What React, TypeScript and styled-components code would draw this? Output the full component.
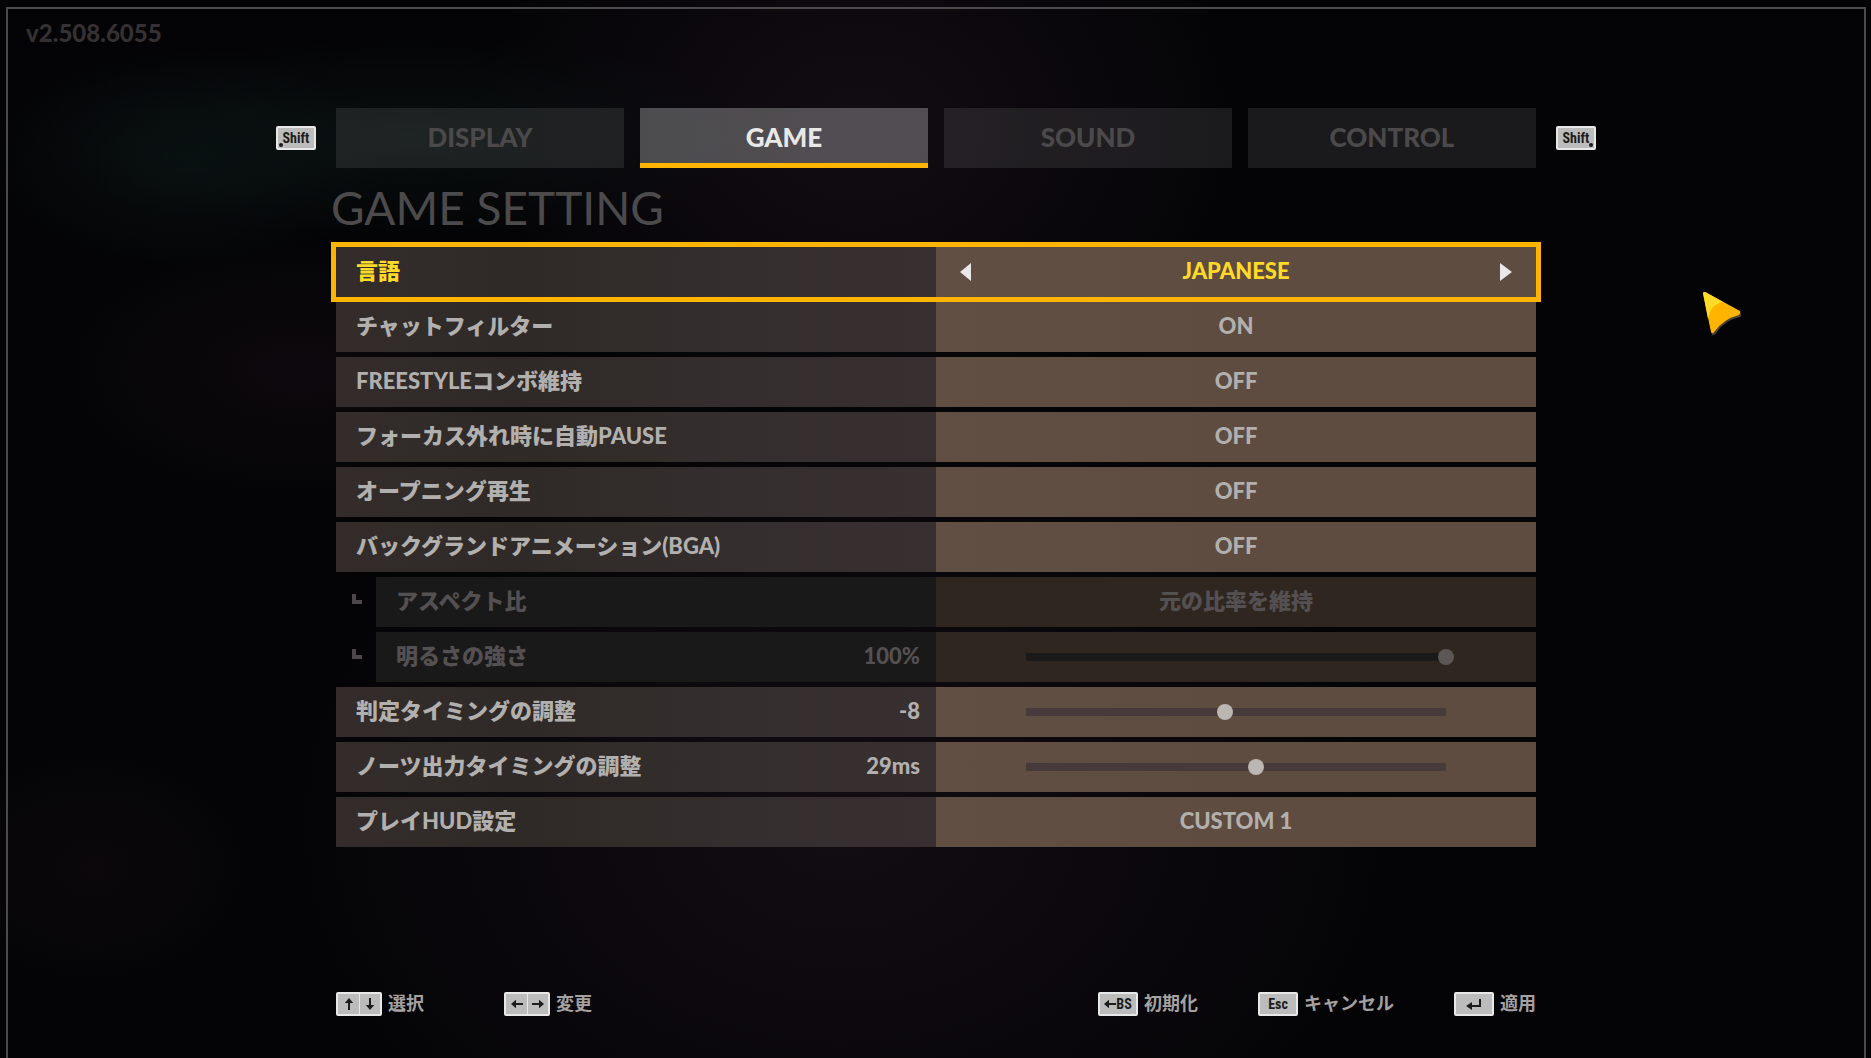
import React, { useState } from "react";
import styled, { createGlobalStyle, css } from "styled-components";

const GlobalStyle = createGlobalStyle`
  *, *::before, *::after { box-sizing: border-box; }
  body {
    margin: 0;
    background: #040406;
    color: #b2b0ae;
    font-family: Lato, "Noto Sans CJK JP", sans-serif;
    font-weight: 900;
  }
  button {
    margin: 0;
    padding: 0;
    border: 0;
    background: none;
    color: inherit;
    font: inherit;
    cursor: inherit;
  }
`;

const Screen = styled.div`
  min-height: 100vh;
  padding: 7px 5px 0 6px;
  display: flex;
  flex-direction: column;
  background:
    radial-gradient(ellipse 200px 110px at 10% 15%, rgba(12, 22, 21, 0.6), transparent),
    radial-gradient(ellipse 380px 100px at 22% 13%, rgba(12, 22, 21, 0.6), transparent),
    radial-gradient(ellipse 380px 300px at 46% 12%, rgba(24, 15, 24, 0.75), transparent),
    radial-gradient(ellipse 240px 130px at 16% 35%, rgba(22, 13, 20, 0.5), transparent),
    radial-gradient(ellipse 560px 420px at 45% 78%, rgba(24, 15, 24, 0.75), transparent),
    radial-gradient(ellipse 160px 120px at 5% 82%, rgba(18, 11, 16, 0.5), transparent),
    #040406;
`;

const Frame = styled.div`
  position: relative;
  flex: 1;
  display: flex;
  flex-direction: column;
  border: 2px solid #4c4a4b;
  border-bottom: 0;
`;

const Version = styled.div`
  height: 99px;
  padding: 8px 18px;
  font-size: 24px;
  line-height: 32px;
  color: #353132;
`;

const Content = styled.div`
  width: 100%;
  max-width: 1320px;
  margin: 0 auto;
  flex: 1;
  display: flex;
  flex-direction: column;
`;

const TabBar = styled.nav`
  display: flex;
  align-items: center;
  gap: 20px;
`;

const TabList = styled.div`
  flex: 1;
  display: grid;
  grid-template-columns: repeat(4, 1fr);
  gap: 16px;
`;

const Tab = styled.button<{ $active: boolean }>`
  height: 60px;
  padding-bottom: 2px;
  font-size: 26px;
  line-height: 48px;
  color: ${(p) => (p.$active ? "#e9e8e8" : "#4b494a")};
  background: ${(p) => (p.$active ? "rgba(255, 255, 255, 0.27)" : "rgba(255, 255, 255, 0.09)")};
  border-bottom: 5px solid ${(p) => (p.$active ? "#ffb400" : "transparent")};
  border-top: 5px solid transparent;
`;

const Panel = styled.main`
  padding: 0 60px;
`;

const Title = styled.h1`
  margin: 0 0 0 -5px;
  font-size: 46px;
  line-height: 79px;
  font-weight: 400;
  color: #4c4a4b;
`;

const Rows = styled.div`
  display: grid;
  gap: 5px;
`;

const Row = styled.div<{ $selected?: boolean; $disabled?: boolean }>`
  display: flex;
  height: 50px;
  font-size: 22px;
  line-height: 48px;
  color: ${(p) => (p.$selected ? "#ffda29" : p.$disabled ? "#545051" : "#b2b0ae")};
  ${(p) =>
    p.$selected &&
    css`
      outline: 5px solid #ffb400;
      z-index: 1;
    `}
`;

const Branch = styled.div`
  width: 40px;
  display: flex;
  align-items: center;
  padding: 0 0 6px 16px;
`;

const BranchMark = styled.span`
  width: 10px;
  height: 10px;
  border: solid #4c4748;
  border-width: 0 0 4px 4px;
`;

const NameCell = styled.div<{ $disabled?: boolean; $indent?: boolean }>`
  width: ${(p) => (p.$indent ? "calc(50% - 40px)" : "50%")};
  display: flex;
  justify-content: space-between;
  padding: 0 16px 0 20px;
  white-space: nowrap;
  background: ${(p) =>
    p.$disabled ? "#1a191a" : "linear-gradient(90deg, #332c2b, #2f2a28 30%, #352e2e 70%, #372f30)"};
`;

const ValueCell = styled.div<{ $disabled?: boolean }>`
  width: 50%;
  display: flex;
  align-items: center;
  justify-content: center;
  background: ${(p) => (p.$disabled ? "#2f2620" : "linear-gradient(90deg, #624f44, #5f4c41 50%, #5e4c40)")};
`;

const Choice = styled.button`
  flex: 1;
  height: 50px;
  padding-bottom: 2px;
`;

const Stepper = styled.div`
  flex: 1;
  display: flex;
  align-items: center;
  justify-content: space-between;
  padding: 0 24px;
`;

const StepValue = styled.output`
  padding-bottom: 2px;
`;

const StepButton = styled.button`
  display: flex;
  width: 12px;
  height: 18px;
`;

const Slider = styled.input`
  appearance: none;
  width: 436px;
  height: 16px;
  margin: 0;
  background: linear-gradient(#463b3a, #463b3a) center / calc(100% - 16px) 8px no-repeat;
  &::-webkit-slider-thumb {
    appearance: none;
    width: 16px;
    height: 16px;
    border-radius: 50%;
    background: #bbb6b1;
  }
  &:disabled {
    background-image: linear-gradient(#1b1919, #1b1919);
  }
  &:disabled::-webkit-slider-thumb {
    background: #5c5654;
  }
`;

const Footer = styled.footer`
  margin-top: auto;
  padding: 0 60px 42px;
  display: flex;
  justify-content: space-between;
`;

const HintGroup = styled.div<{ $gap: number }>`
  display: flex;
  gap: ${(p) => p.$gap}px;
`;

const Hint = styled.button`
  display: flex;
  align-items: center;
  gap: 6px;
  height: 24px;
  font-size: 18px;
  font-weight: 700;
  line-height: 22px;
  color: #a5a1a0;
`;

const HintText = styled.span`
  padding-bottom: 2px;
`;

const Keys = styled.span`
  display: flex;
  border: 2px solid #e8e8e8;
  border-radius: 2px;
  background: #bcbcbc;
`;

const Key = styled.span<{ $narrow?: boolean }>`
  position: relative;
  width: ${(p) => (p.$narrow ? 21 : 36)}px;
  height: 20px;
  display: flex;
  align-items: center;
  justify-content: center;
  font: 700 14px/20px "Liberation Sans Narrow", "Roboto Condensed", "Liberation Sans", sans-serif;
  color: #1c1c1c;
  & + & {
    border-left: 1px solid #e8e8e8;
  }
`;

const Dot = styled.i<{ $side: "left" | "right" }>`
  position: absolute;
  bottom: 1px;
  ${(p) => p.$side}: 1px;
  width: 4px;
  height: 4px;
  border-radius: 50%;
  background: #1c1c1c;
`;

const Pointer = styled.svg`
  position: absolute;
  top: 283px;
  left: 91.3%;
`;

const ArrowIcon = ({ turn }: { turn: number }) => (
  <svg width="12" height="12" viewBox="0 0 12 12" aria-hidden="true">
    <g transform={`rotate(${turn} 6 6)`} fill="#1c1c1c">
      <path d="M0 6 5 1.8V5h7v2H5v3.2z" />
    </g>
  </svg>
);

const EnterIcon = () => (
  <svg width="18" height="14" viewBox="0 0 18 14" aria-hidden="true">
    <path d="M15 2v7H6" fill="none" stroke="#1c1c1c" strokeWidth="2" />
    <path d="M1 9 7 5v8z" fill="#1c1c1c" />
  </svg>
);

const ShiftKey = ({ side }: { side: "left" | "right" }) => (
  <Keys>
    <Key>
      Shift
      <Dot $side={side} />
    </Key>
  </Keys>
);

type Setting = {
  id: string;
  name: string;
  kind: "stepper" | "choice" | "slider";
  value: string;
  child?: boolean;
  range?: [min: number, max: number, start: number];
  unit?: string;
};

const settings: Setting[] = [
  { id: "language", name: "言語", kind: "stepper", value: "JAPANESE" },
  { id: "chat", name: "チャットフィルター", kind: "choice", value: "ON" },
  { id: "freestyle", name: "FREESTYLEコンボ維持", kind: "choice", value: "OFF" },
  { id: "focus", name: "フォーカス外れ時に自動PAUSE", kind: "choice", value: "OFF" },
  { id: "opening", name: "オープニング再生", kind: "choice", value: "OFF" },
  { id: "bga", name: "バックグランドアニメーション(BGA)", kind: "choice", value: "OFF" },
  { id: "aspect", name: "アスペクト比", kind: "choice", value: "元の比率を維持", child: true },
  { id: "brightness", name: "明るさの強さ", kind: "slider", value: "", child: true, range: [0, 100, 100], unit: "%" },
  { id: "judge", name: "判定タイミングの調整", kind: "slider", value: "", range: [-150, 150, -8], unit: "" },
  { id: "notes", name: "ノーツ出力タイミングの調整", kind: "slider", value: "", range: [-300, 300, 29], unit: "ms" },
  { id: "hud", name: "プレイHUD設定", kind: "choice", value: "CUSTOM 1" },
];

const SettingRow = ({ item }: { item: Setting }) => {
  const [amount, setAmount] = useState(item.range ? item.range[2] : 0);
  const off = item.child;
  return (
    <Row $selected={item.kind === "stepper"} $disabled={off}>
      {off && (
        <Branch>
          <BranchMark />
        </Branch>
      )}
      <NameCell $disabled={off} $indent={off}>
        <label htmlFor={item.id}>{item.name}</label>
        {item.range && (
          <output htmlFor={item.id}>
            {amount}
            {item.unit}
          </output>
        )}
      </NameCell>
      <ValueCell $disabled={off}>
        {item.kind === "slider" && item.range && (
          <Slider
            id={item.id}
            type="range"
            min={item.range[0]}
            max={item.range[1]}
            value={amount}
            disabled={off}
            onChange={(e) => setAmount(Number(e.target.value))}
          />
        )}
        {item.kind === "choice" && (
          <Choice id={item.id} type="button" disabled={off}>
            {item.value}
          </Choice>
        )}
        {item.kind === "stepper" && (
          <Stepper>
            <StepButton type="button" aria-label="前へ">
              <svg width="12" height="18" viewBox="0 0 12 18">
                <path d="M11 0v18L0 9z" fill="#e8e8e8" />
              </svg>
            </StepButton>
            <StepValue id={item.id}>{item.value}</StepValue>
            <StepButton type="button" aria-label="次へ">
              <svg width="12" height="18" viewBox="0 0 12 18">
                <path d="M0 0v18l12-9z" fill="#e8e8e8" />
              </svg>
            </StepButton>
          </Stepper>
        )}
      </ValueCell>
    </Row>
  );
};

const tabs = ["DISPLAY", "GAME", "SOUND", "CONTROL"];

export default function App() {
  const [active, setActive] = useState("GAME");
  return (
    <>
      <GlobalStyle />
      <Screen>
        <Frame>
          <Version>v2.508.6055</Version>
          <Content>
            <TabBar>
              <ShiftKey side="left" />
              <TabList role="tablist">
                {tabs.map((t) => (
                  <Tab
                    key={t}
                    type="button"
                    role="tab"
                    aria-selected={t === active}
                    $active={t === active}
                    onClick={() => setActive(t)}
                  >
                    {t}
                  </Tab>
                ))}
              </TabList>
              <ShiftKey side="right" />
            </TabBar>
            <Panel>
              <Title>GAME SETTING</Title>
              <Rows>
                {settings.map((s) => (
                  <SettingRow key={s.id} item={s} />
                ))}
              </Rows>
            </Panel>
            <Footer>
              <HintGroup $gap={80}>
                <Hint type="button">
                  <Keys>
                    <Key $narrow><ArrowIcon turn={90} /></Key>
                    <Key $narrow><ArrowIcon turn={270} /></Key>
                  </Keys>
                  <HintText>選択</HintText>
                </Hint>
                <Hint type="button">
                  <Keys>
                    <Key $narrow><ArrowIcon turn={0} /></Key>
                    <Key $narrow><ArrowIcon turn={180} /></Key>
                  </Keys>
                  <HintText>変更</HintText>
                </Hint>
              </HintGroup>
              <HintGroup $gap={60}>
                <Hint type="button">
                  <Keys>
                    <Key><ArrowIcon turn={0} />BS</Key>
                  </Keys>
                  <HintText>初期化</HintText>
                </Hint>
                <Hint type="button">
                  <Keys>
                    <Key>Esc</Key>
                  </Keys>
                  <HintText>キャンセル</HintText>
                </Hint>
                <Hint type="button">
                  <Keys>
                    <Key><EnterIcon /></Key>
                  </Keys>
                  <HintText>適用</HintText>
                </Hint>
              </HintGroup>
            </Footer>
          </Content>
          <Pointer width="40" height="44" viewBox="0 0 40 44" aria-hidden="true">
            <path d="M9 41Q18 29 38 21Q39 24 37 25Q22 28 14 40Q12 44 9 43z" fill="#4a4140" />
            <path d="M0 1 Q1 -1 4 1L37 19Q38 21 36 23Q21 27 12 39Q9 43 8 40z" fill="#ffb400" />
            <path d="M0 1 Q1 -1 4 1L20 10 Q7 13 5 27z" fill="#ffda29" />
          </Pointer>
        </Frame>
      </Screen>
    </>
  );
}
